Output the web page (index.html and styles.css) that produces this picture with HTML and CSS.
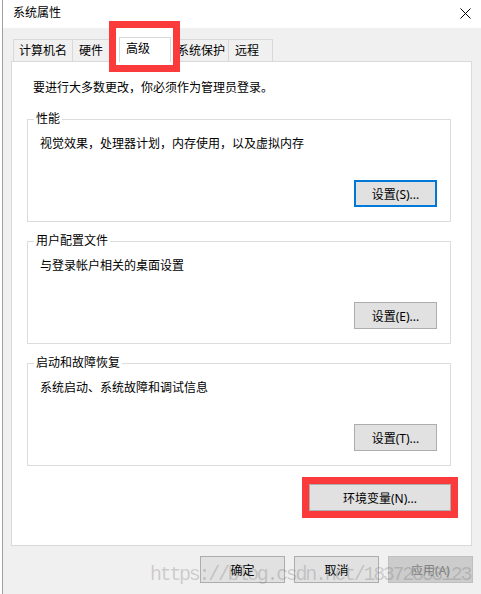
FILE: index.html
```html
<!DOCTYPE html>
<html lang="zh-CN">
<head>
<meta charset="utf-8">
<title>系统属性</title>
<link rel="stylesheet" href="styles.css">
</head>
<body>
<div class="window">
  <div class="titlebar">
    <span class="title">系统属性</span>
    <svg class="close" width="11" height="11" viewBox="0 0 11 11"><path d="M0.5 0.5 L10.5 10.5 M10.5 0.5 L0.5 10.5" stroke="#000" stroke-width="1" fill="none"/></svg>
  </div>
  <div class="tabs">
    <div class="tab t1">计算机名</div>
    <div class="tab t2">硬件</div>
    <div class="tab t3 active">高级</div>
    <div class="tab t4">系统保护</div>
    <div class="tab t5">远程</div>
  </div>
  <div class="panel">
    <p class="intro">要进行大多数更改，你必须作为管理员登录。</p>
    <div class="groups">
      <fieldset class="group">
        <legend>性能</legend>
        <p class="desc">视觉效果，处理器计划，内存使用，以及虚拟内存</p>
        <div class="btn-row"><button class="btn focused">设置(S)...</button></div>
      </fieldset>
      <fieldset class="group">
        <legend>用户配置文件</legend>
        <p class="desc">与登录帐户相关的桌面设置</p>
        <div class="btn-row"><button class="btn">设置(E)...</button></div>
      </fieldset>
      <fieldset class="group">
        <legend>启动和故障恢复</legend>
        <p class="desc">系统启动、系统故障和调试信息</p>
        <div class="btn-row"><button class="btn">设置(T)...</button></div>
      </fieldset>
    </div>
    <div class="env-row"><button class="btn env">环境变量(N)...</button></div>
  </div>
  <div class="dialog-buttons">
    <button class="btn wide">确定</button>
    <button class="btn wide">取消</button>
    <button class="btn wide disabled">应用(A)</button>
  </div>
  <div class="watermark">https://blog.csdn.net/18372853123</div>
</div>
</body>
</html>
```

FILE: styles.css
```css
html, body {
  margin: 0;
  padding: 0;
  background: #ffffff;
}

body {
  width: 481px;
  height: 594px;
  overflow: hidden;
  font-family: "Noto Sans", "Noto Sans CJK SC", sans-serif;
  font-size: 12px;
  color: #000;
}

.window {
  position: relative;
  margin-left: 2px;
  width: 479px;
  height: 594px;
  box-sizing: border-box;
  border-left: 1px solid #a0a0a0;
  background: #f0f0f0;
}

.titlebar {
  height: 28px;
  box-sizing: border-box;
  background: #ffffff;
  display: flex;
  justify-content: space-between;
  align-items: flex-start;
  padding: 5px 10px 0 10px;
}

.title {
  line-height: 16px;
}

.close {
  margin-top: 3px;
}

.tabs {
  display: flex;
  align-items: flex-end;
  height: 24px;
  margin: 9px 0 0 10px;
}

.tab {
  box-sizing: border-box;
  height: 22px;
  line-height: 21px;
  border: 1px solid #d9d9d9;
  border-bottom: none;
  border-right: none;
  padding-left: 6px;
  white-space: nowrap;
  background: #f0f0f0;
}

.t1 { width: 59px; padding-left: 5px; }
.t2 { width: 49px; }
.t4 { width: 59px; padding-left: 7px; }
.t5 { width: 45px; border-right: 1px solid #d9d9d9; }

.tab.active {
  position: relative;
  z-index: 2;
  width: 52px;
  height: 25px;
  line-height: 21px;
  margin: 0 -2px -1px -2px;
  border-right: 1px solid #d9d9d9;
  background: #ffffff;
  box-shadow: 0 -4px 0 5px #ffffff;
}

.tab.active::after {
  content: "";
  position: absolute;
  left: -11px;
  top: -17px;
  width: 71px;
  height: 51px;
  box-sizing: border-box;
  border: 7px solid #fb3b3b;
}

.panel {
  margin-left: 8px;
  width: 461px;
  height: 485px;
  box-sizing: border-box;
  border: 1px solid #d9d9d9;
  background: #ffffff;
  padding: 18px 20px 0 15px;
}

.intro {
  margin: 0 0 15px 6px;
  line-height: 16px;
}

.groups {
  display: flex;
  flex-direction: column;
  gap: 11px;
}

.group {
  margin: 0;
  min-width: 0;
  border: 1px solid #dcdcdc;
  padding: 0 13px 14px 12px;
}

.group legend {
  padding: 0 2px;
  margin-left: -6px;
  line-height: 16px;
}

.desc {
  margin: 9px 0 0 0;
  line-height: 16px;
}

.btn-row {
  margin-top: 28px;
  display: flex;
  justify-content: flex-end;
}

.btn {
  box-sizing: border-box;
  width: 83px;
  height: 27px;
  padding: 0;
  margin: 0;
  background: #e1e1e1;
  border: 1px solid #adadad;
  border-radius: 0;
  font-family: "Noto Sans", "Noto Sans CJK SC", sans-serif;
  font-size: 12px;
  color: #000;
}

.btn.focused {
  border: 2px solid #0078d7;
}

.env-row {
  margin-top: 18px;
  display: flex;
  justify-content: flex-end;
}

.btn.env {
  width: 142px;
  outline: 7px solid #fb3b3b;
  outline-offset: 0;
}

.dialog-buttons {
  margin-top: 10px;
  display: flex;
  justify-content: flex-end;
  gap: 9px;
  padding-right: 8px;
}

.btn.wide {
  width: 85px;
}

.btn.disabled {
  background: #cccccc;
  border-color: #bfbfbf;
  color: #838383;
}

.watermark {
  position: absolute;
  left: 147px;
  top: 563px;
  z-index: 5;
  font-family: "Liberation Mono", monospace;
  font-size: 20px;
  line-height: 24px;
  letter-spacing: -2.3px;
  color: rgba(110, 110, 110, 0.28);
  white-space: nowrap;
  pointer-events: none;
}
```
